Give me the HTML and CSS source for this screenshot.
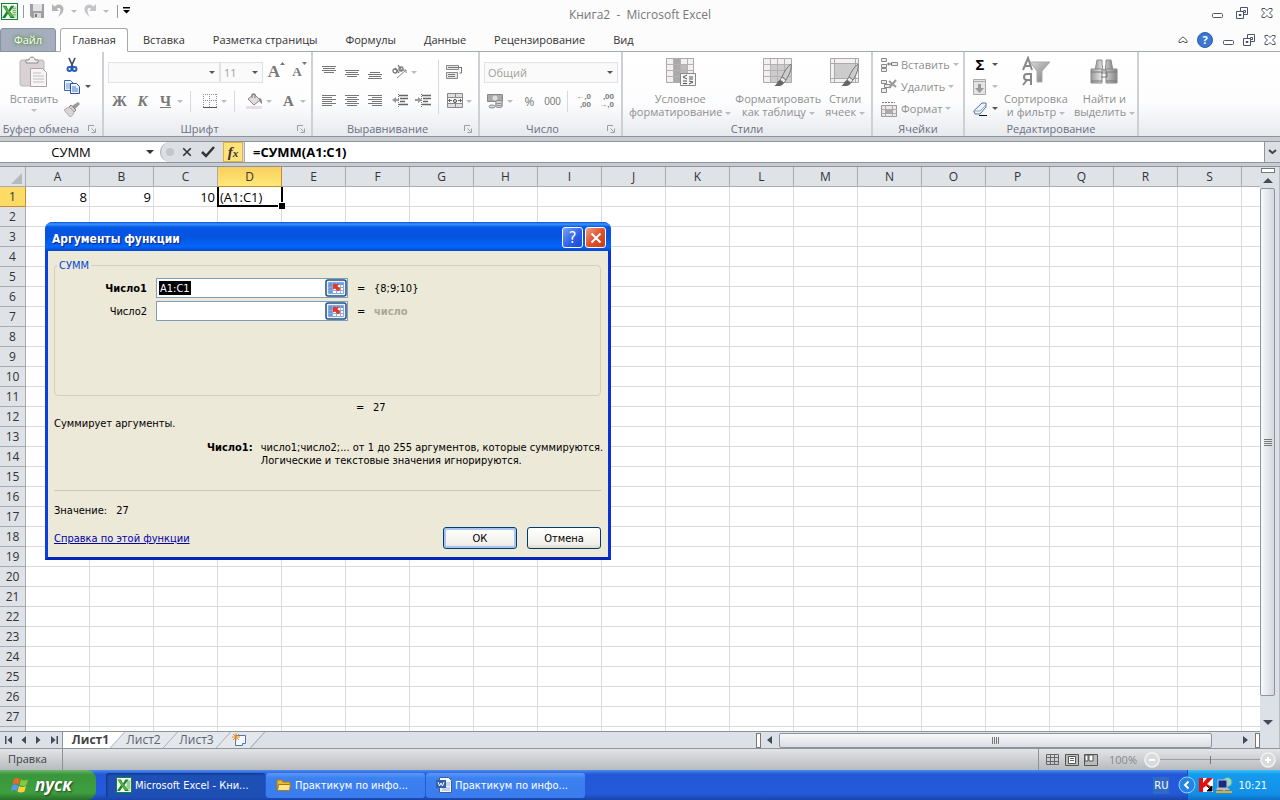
FILE: index.html
```html
<!DOCTYPE html>
<html lang="ru">
<head>
<meta charset="utf-8">
<title>Книга2 - Microsoft Excel</title>
<link rel="stylesheet" href="styles.css">
</head>
<body>
<svg class="defs" width="0" height="0" aria-hidden="true">
  <defs>
    <linearGradient id="gm" x1="0" y1="0" x2="1" y2="1"><stop offset="0" stop-color="#d8d8d8"/><stop offset="1" stop-color="#777"/></linearGradient>
    <linearGradient id="gb" x1="0" y1="0" x2="1" y2="0"><stop offset="0" stop-color="#999"/><stop offset=".4" stop-color="#e6e6e6"/><stop offset="1" stop-color="#888"/></linearGradient>
    <symbol id="min" viewBox="0 0 12 12"><rect x="1.500" y="6.500" width="10" height="4" rx="1" fill="#fff" stroke="#4c5468"/></symbol>
    <symbol id="rest" viewBox="0 0 12 12"><g fill="#fff" stroke="#4c5468"><path d="M4.500.5h7v7h-7z"/><path d="M7.500 3.500h2v2h-2z"/><path d="M.5 4.500h7v7h-7z"/><path d="M3 7.500h2v1H3z"/></g></symbol>
    <symbol id="cls" viewBox="0 0 12 12"><path d="M1 1.500h3l2 2 2-2h3v2L8.500 6 11 8.500v2H8l-2-2-2 2H1v-2L3.500 6 1 3.500z" fill="#fff" stroke="#4c5468"/></symbol>
    <symbol id="launch" viewBox="0 0 8 8"><path d="M.5 6V.5H6M3.500 3.500l3 3M7.500 3.500v4h-4" fill="none" stroke="#999ea8"/></symbol>
    <symbol id="xl" viewBox="0 0 16 16"><path d="M.5.5h15v15H.5z" fill="#f4fbef" stroke="#16823a"/><path d="M10 3h5v11h-5z" fill="#cfe6c4"/><path d="M11 5h3M11 7h3M11 9h3M11 11h3" stroke="#77a773"/><path d="M1.500 2.500h3.500l2 4L9.500 2.500H12.500L8.500 8l4.500 6H9L6.500 10 4 14H1L5 8z" fill="#178238"/><path d="M2 3h2l8 10h-3z" fill="#5db33e"/></symbol>
    <symbol id="rng" viewBox="0 0 22 18"><rect x="1" y="1" width="20" height="16" rx="2" fill="#eef3fb" stroke="#1c5180" stroke-width="1.500"/><path d="M3.500 3.500h15v11h-15z" fill="#fff" stroke="#8ba6dc"/><path d="M4 4h14v2H4zM4 6h3v8H4z" fill="#6d93dd"/><path d="M4 8.500h14M4 11.500h14M7.500 4v10M11.500 4v10M15.500 4v10" stroke="#8fa8df"/><path d="M8 5h6l-1.500 2 3 3-2.500 2.500-3-3-2 1z" fill="#e23a22"/></symbol>
    <symbol id="brush" viewBox="0 0 20 26"><path d="M18 2c-4 3-7 8-9 13l4 3c3-5 6-11 5-16z" fill="#ccc" stroke="#777"/><path d="M9 15l4 3-2 3-4-3z" fill="#eee" stroke="#777"/><path d="M7 18l4 3c-2 4-6 3-10 3 3-1 3-5 6-6z" fill="#666"/></symbol>
  </defs>
</svg>
<div class="app">
  <header class="top">
    <div class="titlebar">
      <div class="qat">
        <svg width="17" height="17"><use href="#xl"/></svg>
        <i class="vsep"></i>
        <button class="tool" aria-label="Сохранить"><svg width="16" height="16" viewBox="0 0 16 16"><path d="M1 1h14v14H3l-2-2z" fill="#9d9fa3"/><path d="M4 1h9v7H4z" fill="#e3e3e5"/><path d="M5 10h7v5H5z" fill="#d9d9db"/><path d="M6 11h2v3H6z" fill="#777"/></svg></button>
        <button class="tool" aria-label="Отменить"><svg width="16" height="16" viewBox="0 0 16 16"><path d="M2 1v7h7L6.800 5.800C10 3.500 12.500 7 8 14c8-5 7-13-.5-12.500L4.500 3.500z" fill="#b3b5b9"/></svg><i class="dd pale"></i></button>
        <button class="tool" aria-label="Вернуть"><svg width="16" height="16" viewBox="0 0 16 16"><path d="M14 1v7H7l2.200-2.200C6 3.500 3.500 7 8 14 0 9 1 1 8.500 1.500l3 2z" fill="#c3c5c9"/></svg><i class="dd pale"></i></button>
        <i class="vsep last"></i>
        <button class="tool" aria-label="Настройка"><svg width="8" height="8" viewBox="0 0 8 8"><path d="M0 0h7v1.500H0zM0 3h7L3.500 6.500z"/></svg></button>
      </div>
      <h1 class="title">Книга2&nbsp; -&nbsp; Microsoft Excel</h1>
      <div class="winbtns">
        <button aria-label="Свернуть"><svg width="12" height="12"><use href="#min"/></svg></button>
        <button aria-label="Восстановить"><svg width="12" height="12"><use href="#rest"/></svg></button>
        <button aria-label="Закрыть"><svg width="12" height="12"><use href="#cls"/></svg></button>
      </div>
    </div>
    <nav class="tabs">
      <button class="tab file">Файл</button>
      <button class="tab active">Главная</button>
      <button class="tab">Вставка</button>
      <button class="tab">Разметка страницы</button>
      <button class="tab">Формулы</button>
      <button class="tab">Данные</button>
      <button class="tab">Рецензирование</button>
      <button class="tab">Вид</button>
      <div class="docbtns">
        <button aria-label="Свернуть ленту"><svg width="10" height="8" viewBox="0 0 10 8"><path d="M5 .8L9 4.500v2H7L5 5 3 6.500H1v-2z" fill="#fff" stroke="#4c5468"/></svg></button>
        <button aria-label="Справка" class="help">?</button>
        <button aria-label="Свернуть окно"><svg width="12" height="12"><use href="#min"/></svg></button>
        <button aria-label="Восстановить окно"><svg width="12" height="12"><use href="#rest"/></svg></button>
        <button aria-label="Закрыть окно"><svg width="12" height="12"><use href="#cls"/></svg></button>
      </div>
    </nav>
  </header>

  <section class="ribbon">
    <div class="group g-clip">
      <div class="gbody">
        <button class="big"><svg width="32" height="32" viewBox="0 0 32 32"><rect x="2" y="4" width="24" height="26" rx="2" fill="#d9d2d5" stroke="#bdb6b9"/><path d="M8 7V4h3c0-4 6-4 6 0h3v3z" fill="#eee" stroke="#8f8f8f"/><path d="M12.500 12.500h12l4 4v14h-16z" fill="#f7f5f6" stroke="#a9a4a6"/><path d="M15 17h8M15 20h11M15 23h11M15 26h11" stroke="#c2bdbf"/></svg><span>Вставить</span><i class="dd pale"></i></button>
        <div class="stack">
          <button class="tool" aria-label="Вырезать"><svg width="16" height="16" viewBox="0 0 16 16"><path d="M5 1l4 9M11 1L7 10" stroke="#3c4a66" stroke-width="1.600"/><circle cx="5.500" cy="12" r="2" fill="none" stroke="#2a5bb8" stroke-width="2"/><circle cx="10.500" cy="12" r="2" fill="none" stroke="#2a5bb8" stroke-width="2"/></svg></button>
          <button class="tool" aria-label="Копировать"><svg width="16" height="16" viewBox="0 0 16 16"><path d="M.5 1.500h6l3 3v7h-9z" fill="#eef4ff" stroke="#3767ae"/><path d="M2 5h4M2 7h4M2 9h4" stroke="#6a93d0"/><path d="M6.500 4.500h6l3 3v7h-9z" fill="#eef4ff" stroke="#2a5299"/><path d="M8 8h4M8 10h6M8 12h6" stroke="#4a79c4"/></svg><i class="dd"></i></button>
          <button class="tool" aria-label="Формат по образцу"><svg width="16" height="16" viewBox="0 0 16 16"><path d="M14 1l2 2-5 5-3-3z" fill="#999"/><path d="M7 4l5 5-2 2-5-5z" fill="#ccc" stroke="#888"/><path d="M5 6l5 5c0 2-2 4-4 5L0 9z" fill="#ddd5d5" stroke="#aaa"/></svg></button>
        </div>
      </div>
      <div class="glabel"><span>Буфер обмена</span><svg width="8" height="8"><use href="#launch"/></svg></div>
    </div>

    <div class="group g-font">
      <div class="gbody rows">
        <div class="row">
          <span class="sel wide"><select aria-label="Шрифт"><option></option></select></span><span class="sel size"><select aria-label="Размер"><option>11</option></select></span>
          <button class="ib gly big-a" aria-label="Увеличить">A<svg width="5" height="4" viewBox="0 0 5 4"><path d="M0 3l2.500-3L5 3z" fill="#777"/></svg></button>
          <button class="ib gly small-a" aria-label="Уменьшить">A<svg width="5" height="4" viewBox="0 0 5 4"><path d="M0 0h5L2.500 3z" fill="#777"/></svg></button>
        </div>
        <div class="row">
          <button class="ib gly b">Ж</button><button class="ib gly i">К</button><button class="ib gly u">Ч</button><i class="dd pale"></i>
          <i class="rsep"></i>
          <button class="ib" aria-label="Границы"><svg width="14" height="14" viewBox="0 0 14 14"><path d="M0 .5h14M0 6.500h14M.5 0v13M6.500 0v13M13.500 0v13" stroke="#8f8f8f" stroke-dasharray="1 1"/><path d="M0 13.500h14" stroke="#555"/></svg></button><i class="dd pale"></i>
          <i class="rsep"></i>
          <button class="ib fill" aria-label="Заливка"><svg width="18" height="16" viewBox="0 0 18 16"><path d="M8 1l6 6-6 5-6-6z" fill="#ddd" stroke="#888"/><path d="M6 5V1h3v4" fill="none" stroke="#777"/><path d="M13 5c3 0 3 3 3 6-2-1-3-3-3-6z" fill="#888"/><path d="M0 13h16v3H0z" fill="#e8dfe2"/></svg></button><i class="dd pale"></i>
          <button class="ib gly col">A</button><i class="dd pale"></i>
        </div>
      </div>
      <div class="glabel"><span>Шрифт</span><svg width="8" height="8"><use href="#launch"/></svg></div>
    </div>

    <div class="group g-align">
      <div class="gbody">
        <div class="rows">
          <div class="row">
            <button class="ib" aria-label="По верхнему краю"><svg width="14" height="14" viewBox="0 0 14 14"><path d="M0 1.500h14M1 3.500h12M0 5.500h14M2 7.500h10" stroke="#777"/></svg></button>
            <button class="ib" aria-label="По середине"><svg width="14" height="14" viewBox="0 0 14 14"><path d="M0 5.500h14M1 7.500h12M0 9.500h14M2 11.500h10" stroke="#777"/></svg></button>
            <button class="ib" aria-label="По нижнему краю"><svg width="14" height="14" viewBox="0 0 14 14"><path d="M2 7.500h10M0 9.500h14M1 11.500h12M0 13.500h14" stroke="#777"/></svg></button>
            <button class="ib orient" aria-label="Ориентация"><svg width="18" height="16" viewBox="0 0 18 16"><g fill="none" stroke="#777" stroke-width="1.300"><circle cx="4" cy="7" r="2"/><path d="M4 4l4 5M7 1l4 6"/><circle cx="10" cy="5" r="2"/></g><path d="M6 14l9-8M12 6h3v3" fill="none" stroke="#888"/></svg></button><i class="dd pale"></i>
          </div>
          <div class="row">
            <button class="ib" aria-label="По левому краю"><svg width="14" height="14" viewBox="0 0 14 14"><path d="M0 1.500h14M0 3.500h10M0 5.500h14M0 7.500h10M0 9.500h14M0 11.500h10" stroke="#777"/></svg></button>
            <button class="ib" aria-label="По центру"><svg width="14" height="14" viewBox="0 0 14 14"><path d="M0 1.500h14M2 3.500h10M0 5.500h14M2 7.500h10M0 9.500h14M2 11.500h10" stroke="#777"/></svg></button>
            <button class="ib" aria-label="По правому краю"><svg width="14" height="14" viewBox="0 0 14 14"><path d="M0 1.500h14M4 3.500h10M0 5.500h14M4 7.500h10M0 9.500h14M4 11.500h10" stroke="#777"/></svg></button>
            <button class="ib orient" aria-label="Уменьшить отступ"><svg width="16" height="14" viewBox="0 0 16 14"><path d="M7 1.500h9M8 4.500h8M8 7.500h5M7 10.500h9" stroke="#666" stroke-width="1.500"/><path d="M6.500 0v14" stroke="#777" stroke-dasharray="1 1"/><path d="M0 6l4-3v2h3v2H4v2z" fill="#999"/></svg></button>
            <button class="ib" aria-label="Увеличить отступ"><svg width="16" height="14" viewBox="0 0 16 14"><path d="M7 1.500h9M8 4.500h8M8 7.500h5M7 10.500h9" stroke="#666" stroke-width="1.500"/><path d="M6.500 0v14" stroke="#777" stroke-dasharray="1 1"/><path d="M7 6L3 3v2H0v2h3v2z" fill="#999"/></svg></button>
          </div>
        </div>
        <i class="rsep tall"></i>
        <div class="rows">
          <div class="row"><button class="ib" aria-label="Перенос текста"><svg width="17" height="16" viewBox="0 0 17 16"><path d="M.5 1.500h12v4H.5zM.5 8.500h11v6H.5z" fill="#e9e6e7" stroke="#888"/><path d="M2 3.500h14M2 10.500h7M2 12.500h7" stroke="#777"/><path d="M15.500 4v5h-2" fill="none" stroke="#777"/></svg></button></div>
          <div class="row"><button class="ib" aria-label="Объединить"><svg width="16" height="16" viewBox="0 0 16 16"><path d="M.5.5h15v14H.5z" fill="#e0dddf" stroke="#888"/><path d="M1 5h14v5H1z" fill="#f6f6f6"/><path d="M0 4.500h16M0 10.500h16M8.500 0v4M8.500 11v4" stroke="#888"/><path d="M1 7.500h4M11 7.500h4M3 6l-1.500 1.500L3 9M13 6l1.500 1.500L13 9" fill="none" stroke="#666"/><circle cx="8" cy="8" r="1.500" fill="none" stroke="#444"/></svg></button><i class="dd pale"></i></div>
        </div>
      </div>
      <div class="glabel"><span>Выравнивание</span><svg width="8" height="8"><use href="#launch"/></svg></div>
    </div>

    <div class="group g-num">
      <div class="gbody rows">
        <div class="row"><span class="sel fmt"><select aria-label="Числовой формат"><option>Общий</option></select></span></div>
        <div class="row">
          <button class="ib" aria-label="Денежный формат"><svg width="17" height="16" viewBox="0 0 17 16"><path d="M.5 1.500h15v7H.5z" fill="#aaa" stroke="#888"/><circle cx="8" cy="5" r="2.500" fill="#ddd"/><g fill="#ddd" stroke="#888"><ellipse cx="12" cy="13" rx="3.500" ry="1.500"/><ellipse cx="12" cy="11" rx="3.500" ry="1.500"/><ellipse cx="12" cy="9" rx="3.500" ry="1.500"/><ellipse cx="5" cy="13.500" rx="3" ry="1.500"/></g></svg></button><i class="dd pale"></i>
          <button class="ib txt pc">%</button><button class="ib txt narrow">000</button>
          <i class="rsep"></i>
          <button class="ib mini" aria-label="Увеличить разрядность"><span>←,0</span><span>,00</span></button>
          <button class="ib mini" aria-label="Уменьшить разрядность"><span>,00</span><span>→,0</span></button>
        </div>
      </div>
      <div class="glabel"><span>Число</span><svg width="8" height="8"><use href="#launch"/></svg></div>
    </div>

    <div class="group g-styles">
      <div class="gbody">
        <button class="big"><svg width="32" height="32" viewBox="0 0 32 32"><path d="M2.500 2.500h27v24h-27z" fill="#f4eff1" stroke="#aaa"/><path d="M9 3h7v24H9z" fill="#aaa"/><path d="M16 9h7v8h-7z" fill="#bbb"/><path d="M2 8.500h28M2 14.500h28M2 20.500h28M9.500 2v25M16.500 2v25M23.500 2v25" stroke="#b5b0b2"/><path d="M16.500 17.500h15v12h-15z" fill="#f6f6f6" stroke="#888"/><path d="M23 19l-4 2 4 2M19 25h4M19 27.500h4M25 21h4M25 23h4M25 25l4 1-4 2" fill="none" stroke="#555"/></svg><span>Условное<br>форматирование <i class="dd pale"></i></span></button>
        <button class="big"><svg width="32" height="32" viewBox="0 0 32 32"><path d="M1.500 2.500h28v24h-28z" fill="#f4eff1" stroke="#aaa"/><path d="M9 9h20v17H9z" fill="#ccc"/><path d="M1 8.500h29M1 14.500h29M1 20.500h29M8.500 2v25M15.500 2v25M22.500 2v25" stroke="#b5b0b2"/><use href="#brush" x="11" y="6" width="20" height="26"/></svg><span>Форматировать<br>как таблицу <i class="dd pale"></i></span></button>
        <button class="big"><svg width="32" height="32" viewBox="0 0 32 32"><path d="M1.500 2.500h28v24h-28z" fill="#f4eff1" stroke="#aaa"/><path d="M6 7h20v15H6z" fill="#ccc"/><path d="M1 7.500h29M1 22.500h29M5.500 2v25M26.500 2v25" stroke="#aaa"/><use href="#brush" x="11" y="6" width="20" height="26"/></svg><span>Стили<br>ячеек <i class="dd pale"></i></span></button>
      </div>
      <div class="glabel"><span>Стили</span></div>
    </div>

    <div class="group g-cells">
      <div class="gbody stack">
        <button class="tool"><svg width="17" height="16" viewBox="0 0 17 16"><path d="M.5 1.500h5v3h-5zM.5 7.500h5v3h-5zM.5 11.500h5v3h-5zM10.500 5.500h6v3h-6z" fill="#eee" stroke="#888"/><path d="M7 7h4M8 5.500L6.500 7 8 8.500" fill="none" stroke="#555"/></svg>Вставить <i class="dd pale"></i></button>
        <button class="tool"><svg width="17" height="16" viewBox="0 0 17 16"><path d="M.5 1.500h5v3h-5zM3.500 5.500h6v3h-6zM.5 9.500h5v4h-5z" fill="#eee" stroke="#888"/><path d="M8 2l7 6M15 1L8 9" stroke="#999" stroke-width="2"/></svg>Удалить <i class="dd pale"></i></button>
        <button class="tool"><svg width="17" height="16" viewBox="0 0 17 16"><path d="M1 1.500h13" stroke="#777" stroke-dasharray="2 1"/><path d="M.5 4.500h15v11H.5z" fill="#eee6e8" stroke="#999"/><path d="M0 8.500h16M0 12.500h16M4.500 4v12M11.500 4v12" stroke="#aaa"/><path d="M5 8h6v4H5z" fill="#aaa"/></svg>Формат <i class="dd pale"></i></button>
      </div>
      <div class="glabel"><span>Ячейки</span></div>
    </div>

    <div class="group g-edit">
      <div class="gbody">
        <div class="stack">
          <button class="tool" aria-label="Сумма"><b class="sigma">Σ</b><i class="dd"></i></button>
          <button class="tool" aria-label="Заполнить"><svg width="14" height="16" viewBox="0 0 14 16"><path d="M.5.5h12v15H.5z" fill="#e5e3e4" stroke="#aaa"/><path d="M1 2.500h11" stroke="#aaa"/><path d="M5 5h3v4h3l-4.500 5L2 9h3z" fill="#999"/></svg><i class="dd pale"></i></button>
          <button class="tool" aria-label="Очистить"><svg width="14" height="14" viewBox="0 0 14 14"><path d="M9 1h4v4l-6 7H2L.7 9z" fill="#eef3fb" stroke="#5a6f96"/><path d="M1 9h6l6-6" fill="none" stroke="#8fa3c8"/><path d="M6 13.500h8" stroke="#111"/></svg><i class="dd"></i></button>
        </div>
        <button class="big"><svg width="32" height="32" viewBox="0 0 32 32"><g fill="none" stroke="#888" stroke-width="2"><path d="M3 14l5-12 4 12M5 10h6"/><path d="M11 29V18H7c-4 0-4 6 0 6h4M7 24l-4 5"/></g><path d="M10 6h20l-8 9v11h-5V15z" fill="url(#gm)" stroke="#aaa"/></svg><span>Сортировка<br>и фильтр <i class="dd pale"></i></span></button>
        <button class="big"><svg width="32" height="32" viewBox="0 0 32 32"><path d="M9 4h5v4l1 6h2l1-6V4h5l2 11H7z" fill="url(#gb)" stroke="#888"/><path d="M3 13h11v14H3zM18 13h11v14H18z" fill="url(#gb)" stroke="#888"/><path d="M3 16h11M18 16h11M3 25h11M18 25h11M13 17h6v4h-6" fill="none" stroke="#777"/></svg><span>Найти и<br>выделить <i class="dd pale"></i></span></button>
      </div>
      <div class="glabel"><span>Редактирование</span></div>
    </div>
  </section>

  <section class="fbar">
    <div class="namebox"><input aria-label="Имя" value="СУММ"><i class="dd dark"></i></div>
    <div class="fbtns">
      <i class="ball"></i>
      <button aria-label="Отмена"><svg width="10" height="10" viewBox="0 0 12 12"><path d="M1.500 1.500l9 9M10.500 1.500l-9 9" stroke="#333" stroke-width="2"/></svg></button>
      <button aria-label="Ввод"><svg width="14" height="12" viewBox="0 0 14 12"><path d="M1 6l4 4 8-9" fill="none" stroke="#333" stroke-width="2.500"/></svg></button>
      <button class="fx" aria-label="Вставить функцию">f<small>x</small></button>
    </div>
    <input class="formula" aria-label="Строка формул" value="=СУММ(A1:C1)">
    <button class="expand" aria-label="Развернуть"><svg width="9" height="6" viewBox="0 0 9 6"><path d="M1 1l3.500 3L8 1" fill="none" stroke="#444" stroke-width="2"/></svg></button>
  </section>

  <main class="work">
    <div class="left">
      <div class="sheet"><table class="grid" id="grid"></table></div>
      <footer class="sheetbar">
        <div class="nav">
          <button aria-label="Первый"><svg width="8" height="8" viewBox="0 0 8 8"><path d="M0 0h1.500v8H0zM7 0v8L2.500 4z" fill="#444b57"/></svg></button>
          <button aria-label="Назад"><svg width="8" height="8" viewBox="0 0 8 8"><path d="M6 0v8L1.500 4z" fill="#444b57"/></svg></button>
          <button aria-label="Вперёд"><svg width="8" height="8" viewBox="0 0 8 8"><path d="M1 0v8l4.500-4z" fill="#444b57"/></svg></button>
          <button aria-label="Последний"><svg width="8" height="8" viewBox="0 0 8 8"><path d="M6.500 0H8v8H6.500zM1 0v8l4.500-4z" fill="#444b57"/></svg></button>
        </div>
        <div class="stabs">
          <button class="st on">Лист1</button><button class="st">Лист2</button><button class="st">Лист3</button><button class="st new" aria-label="Новый лист"><svg width="16" height="14" viewBox="0 0 16 14"><path d="M3.500 2.500h10v8h-3v2h-7z" fill="#f4f8ff" stroke="#5677ab"/><path d="M4 0v8M0 4h8M1 1l6 6M7 1L1 7" stroke="#e0912a"/></svg></button>
        </div>
        <div class="hscroll">
          <i class="split"></i>
          <svg width="6" height="8" viewBox="0 0 6 8"><path d="M5 0v8L0 4z" fill="#444b57"/></svg>
          <i class="hthumb"><b></b></i>
          <svg class="ra" width="6" height="8" viewBox="0 0 6 8"><path d="M0 0v8l5-4z" fill="#444b57"/></svg>
          <i class="split"></i>
        </div>
      </footer>
    </div>
    <div class="vscroll">
      <i class="vsplit"></i>
      <svg width="10" height="5" viewBox="0 0 10 5"><path d="M0 5h10L5 0z" fill="#444b57"/></svg>
      <i class="vthumb"><b></b></i>
      <svg class="da" width="10" height="5" viewBox="0 0 10 5"><path d="M0 0h10L5 5z" fill="#444b57"/></svg>
    </div>
  </main>

  <div class="status">
    <span class="mode">Правка</span>
    <div class="sright">
      <button aria-label="Обычный"><svg width="14" height="12" viewBox="0 0 14 12"><path d="M.5.5h12v10H.5zM0 3.500h13M0 7.500h13M4.500 0v11M8.500 0v11" fill="none" stroke="#666"/></svg></button>
      <button aria-label="Разметка"><svg width="14" height="12" viewBox="0 0 14 12"><path d="M.5.5h13v11H.5z" fill="#bbb" stroke="#555"/><path d="M3.500 2.500h7v7h-7z" fill="#fff" stroke="#555"/><path d="M5 4.500h4M5 6.500h4" stroke="#666"/></svg></button>
      <button aria-label="Страничный"><svg width="14" height="12" viewBox="0 0 14 12"><path d="M.5.5h13v11H.5z" fill="#bbb" stroke="#555"/><path d="M1 1h3v6H1zM5 1h4v6H5z" fill="#fff" stroke="#555"/></svg></button>
      <span class="pct">100%</span>
      <button class="rnd" aria-label="Уменьшить масштаб"><svg width="16" height="16" viewBox="0 0 16 16"><circle cx="8" cy="8" r="7" fill="#d9dadc" stroke="#f2f2f2" stroke-width="1.500"/><path d="M5 8h6" stroke="#fff" stroke-width="2"/></svg></button>
      <input type="range" class="zoom" aria-label="Масштаб" value="50">
      <button class="rnd" aria-label="Увеличить масштаб"><svg width="16" height="16" viewBox="0 0 16 16"><circle cx="8" cy="8" r="7" fill="#d9dadc" stroke="#f2f2f2" stroke-width="1.500"/><path d="M5 8h6M8 5v6" stroke="#fff" stroke-width="2"/></svg></button>
    </div>
  </div>

  <div class="taskbar">
    <button class="start"><svg width="18" height="18" viewBox="0 0 18 18"><path d="M3 3c2-1.500 4-1.500 6 0L7.500 8.500c-2-1.500-4-1.500-6 0z" fill="#f0652a"/><path d="M10 3.500c2 1.300 4 1.300 7 0L15.500 9c-3 1.300-5 1.300-7 0z" fill="#8cc63f"/><path d="M1.200 9.500c2-1.500 4-1.500 6 0L6 15c-2-1.500-4-1.500-6 0z" fill="#5a94f5"/><path d="M8 10c2 1.300 4 1.300 7 0l-1.500 5.500c-3 1.300-5 1.300-7 0z" fill="#fcd13b"/></svg>пуск</button>
    <div class="tasks">
      <button class="task on"><svg width="16" height="16"><use href="#xl"/></svg>Microsoft Excel - Кни...</button>
      <button class="task"><svg width="16" height="16" viewBox="0 0 16 16"><path d="M1 3h5l1 2h7v3H3L1 13z" fill="#e9b93a" stroke="#a77a17"/><path d="M1.500 13.500l1-6h12l-1 6z" fill="#fde58a" stroke="#a77a17"/></svg>Практикум по инфо...</button>
      <button class="task"><svg width="16" height="16" viewBox="0 0 16 16"><path d="M3.500.5h9l3 3v12h-12z" fill="#f3f7fd" stroke="#40608f"/><path d="M10 6h4M10 8h4M6 11h8M6 13h8" stroke="#93abd0"/><path d="M0 3h10v8H0z" fill="#2f5fae"/><path d="M2 5l1.500 4L5 6l1.500 3L8 5" fill="none" stroke="#fff"/></svg>Практикум по инфо...</button>
    </div>
    <span class="lang">RU</span>
    <div class="tray">
      <button class="chev" aria-label="Показать значки"><svg width="18" height="18" viewBox="0 0 18 18"><circle cx="9" cy="9" r="8" fill="#2484e4" stroke="#9cd0fa"/><path d="M10.500 5.500L7 9l3.500 3.500" fill="none" stroke="#fff" stroke-width="2"/></svg></button>
      <svg width="16" height="16" viewBox="0 0 16 16"><path d="M1 1h14v14H1z" fill="#fff"/><path d="M1 1h4v5l4-5h6L9 7l5 3-3 1-3-2-3 2v4H1z" fill="#e01010"/><path d="M9 9l4 4M14 9v5H9z" fill="#000" stroke="#000"/></svg>
      <svg width="17" height="16" viewBox="0 0 17 16"><circle cx="11.500" cy="5" r="4.500" fill="#9adbc0" stroke="#4a9"/><path d="M2 3h9v8H2z" fill="#1a2b80" stroke="#b9c4dd"/><path d="M1 11h11l2 2H0z" fill="#bbb"/><path d="M0 15h16M8 13v2" stroke="#f0a81c" stroke-width="2"/></svg>
      <time>10:21</time>
    </div>
  </div>

  <div class="dialog" role="dialog" aria-labelledby="dt">
    <div class="dtitle"><h2 id="dt">Аргументы функции</h2><button class="dq" aria-label="Справка">?</button><button class="dx" aria-label="Закрыть"><svg width="12" height="12" viewBox="0 0 12 12"><path d="M1.500 1.500l9 9M10.500 1.500l-9 9" stroke="#fff" stroke-width="2"/></svg></button></div>
    <div class="dbody">
      <fieldset class="args">
        <legend>СУММ</legend>
        <label class="bold" for="a1">Число1</label><div class="field"><input id="a1" class="hl" value="A1:C1"><button aria-label="Свернуть"><svg width="22" height="18"><use href="#rng"/></svg></button></div><span>=</span><span>{8;9;10}</span>
        <label for="a2">Число2</label><div class="field"><input id="a2"><button aria-label="Свернуть"><svg width="22" height="18"><use href="#rng"/></svg></button></div><span>=</span><span class="ghost">число</span>
      </fieldset>
      <div class="result"><span>=</span><output>27</output></div>
      <p class="about">Суммирует аргументы.</p>
      <div class="argdesc"><b>Число1:</b><p>число1;число2;... от 1 до 255 аргументов, которые суммируются.<br>Логические и текстовые значения игнорируются.</p></div>
      <hr>
      <p class="value">Значение:<span>27</span></p>
      <div class="dfoot"><a href="#">Справка по этой функции</a><button class="btn def">ОК</button><button class="btn">Отмена</button></div>
    </div>
  </div>
</div>
<script src="script.js"></script>
</body>
</html>
```
FILE: styles.css
```css
* { box-sizing: border-box; }
body { margin: 0; font: 11px/13px "Open Sans", "Noto Sans", sans-serif; color: #3b3f46; }
button { border: 0; padding: 0; margin: 0; background: none; font: inherit; color: inherit; }
input, select { font: inherit; color: inherit; border: 0; padding: 0; margin: 0; border-radius: 0; }
p, h1, h2 { margin: 0; font-weight: normal; }
svg { display: block; flex: none; }
i { font-style: normal; }
.defs { position: absolute; }
.app { position: relative; display: flex; flex-direction: column; height: 100vh; overflow: hidden; background: #c9ccd1; }

.dd { display: inline-block; flex: none; width: 0; height: 0; border: 3px solid transparent; border-top-color: #555; border-bottom: 0; vertical-align: middle; }
.dd.pale { border-top-color: #b9bbc0; }
.dd.dark { border-top-color: #333; border-width: 4px 4px 0; }

/* title and tabs */
.top { background: #fcfcfc; }
.titlebar { display: grid; grid-template-columns: 1fr auto 1fr; align-items: center; height: 28px; }
.qat { display: flex; align-items: center; align-self: start; height: 22px; gap: 5px; padding-left: 1px; }
.vsep { width: 1px; height: 13px; background: #999; }
.last { margin-left: 3px; }
.tool { display: flex; align-items: center; gap: 5px; }
.title { font-size: 12px; color: #777; }
.winbtns, .docbtns { display: flex; align-items: center; gap: 13px; justify-content: flex-end; padding-right: 7px; }
.winbtns { margin-top: -2px; }
.tabs { display: flex; height: 24px; border-bottom: 1px solid #a5a9b0; }
.tab { padding: 0 14px; height: 24px; line-height: 22px; border-radius: 3px 3px 0 0; color: #333; }
.file { width: 56px; padding: 0; margin-right: 4px; background: #a5aebc; border: 1px solid #8a93a1; color: #fff; text-shadow: 0 0 4px #4d8a28, 0 0 3px #4d8a28; }
.active { background: #fff; border: 1px solid #a5a9b0; border-bottom-color: #fff; width: 68px; padding: 0; margin-right: 1px; }
.docbtns { margin-left: auto; gap: 9px; padding-right: 4px; }
.help { width: 16px; height: 16px; border-radius: 50%; background: #3b76cf; border: 1px solid #2a5db0; color: #fff; font-weight: bold; line-height: 14px; }

/* ribbon */
.ribbon { display: flex; height: 85px; flex: none; background: linear-gradient(#fff, #fdfdfe 60%, #e7eaee); border-bottom: 1px solid #8f949c; color: #8f8f8f; }
.group { display: flex; flex-direction: column; flex: none; border-right: 2px solid #cdd0d5; }
.gbody { flex: 1; display: flex; align-items: center; }
.rows { display: flex; flex-direction: column; align-items: stretch; justify-content: center; gap: 8px; }
.row { display: flex; align-items: center; height: 21px; }
.glabel { display: flex; height: 15px; align-items: center; color: #6b6f82; }
.glabel span { flex: 1; text-align: center; line-height: 14px; }
.glabel svg { margin: 0 6px; }
.big { align-self: flex-start; display: flex; flex-direction: column; align-items: center; padding-top: 4px; color: #8f8f8f; }
.big span { margin-top: 4px; white-space: nowrap; }
.big > .dd { margin-top: 4px; }
.stack { display: flex; flex-direction: column; align-items: flex-start; justify-content: center; gap: 6px; }
.stack .tool { height: 16px; gap: 5px; }
.ib { width: 23px; height: 21px; display: flex; align-items: center; justify-content: center; }
.rsep { width: 1px; height: 21px; background: #d5d8dd; margin: 0 7px; }
.g-align .tall { height: 54px; margin: 0 4px; }
.gly { font: bold 15px/20px "Liberation Serif", serif; color: #777; }
.gly svg { align-self: flex-start; }
.big-a { font-size: 17px; }
.i { font-style: italic; }
.u { text-decoration: underline; }
.small-a { font-size: 13px; }
.sel { position: relative; height: 21px; border: 1px solid #dfe2e7; background: #fafafb; }
.sel select { width: 100%; height: 100%; appearance: none; background: none; padding-left: 3px; color: #a3a095; }
.sel::after { content: ""; position: absolute; right: 4px; top: 8px; border: 3px solid transparent; border-top-color: #555; border-bottom: 0; }
.wide { width: 112px; }
.size { width: 43px; margin-right: 2px; }
.fmt { width: 134px; }
.txt { font-size: 12px; color: #777; }
.pc { margin-left: 5px; }
.narrow { font-family: "Liberation Sans", sans-serif; font-size: 10px; }
.mini { flex-direction: column; align-items: flex-end; font: bold 8px/8px "Liberation Sans", sans-serif; color: #777; padding-right: 3px; }
.orient { margin-left: 2px; }
.g-clip { width: 104px; }
.g-clip .big { width: 58px; margin-left: 5px; margin-right: 1px; }
.g-font { width: 209px; padding-left: 4px; }
.g-font .rsep { margin: 0 7px; }
.fill { margin-left: 1px; }
.col { margin-left: 5px; }
.g-align { width: 167px; padding-left: 4px; }
.g-num { width: 143px; padding-left: 4px; }
.g-num .rsep { margin: 0 3px; }
.g-styles { width: 250px; }
.g-styles .gbody { justify-content: space-around; padding: 0 4px; }
.g-cells { width: 92px; }
.g-cells .gbody { padding-left: 8px; }
.g-cells .tool { gap: 3px; }
.g-edit { width: 174px; }
.g-edit .gbody { padding-left: 8px; gap: 6px; }
.sigma { width: 14px; color: #000; font-size: 15px; }

/* formula bar */
.fbar { display: flex; flex: none; height: 22px; margin: 4px 0 3px; background: #fff; border: 1px solid #8d949e; border-width: 1px 0; color: #000; font-size: 13px; }
.namebox { display: flex; align-items: center; width: 158px; padding-right: 4px; }
.namebox input { flex: 1; min-width: 0; text-align: center; padding-right: 4px; }
.fbtns { display: flex; align-items: center; justify-content: space-between; width: 85px; margin-left: 2px; padding: 0 1px 0 5px; border: 1px solid #a5a9b0; border-width: 0 1px; border-radius: 11px 0 0 11px; background: #dcdfe4; }
.ball { width: 8px; height: 8px; border-radius: 50%; background: #c3c6cb; }
.fx { width: 20px; height: 20px; background: #ffe27a; border: 1px solid #d9b14a; font: italic bold 15px/16px "Liberation Serif", serif; color: #333; }
.fx small { font-size: 11px; }
.formula { flex: 1; min-width: 0; padding-left: 8px; font-weight: bold; }
.expand { width: 16px; display: flex; align-items: center; justify-content: center; background: #dcdfe4; border-left: 1px solid #8d949e; }

/* sheet */
.work { flex: 1; min-height: 0; display: flex; border-top: 1px solid #8d949e; }
.left { flex: 1; min-width: 0; display: flex; flex-direction: column; }
.sheet { flex: 1; min-height: 0; overflow: hidden; background: #fff; }
.grid { border-collapse: separate; border-spacing: 0; table-layout: fixed; width: 1370px; font-size: 12px; line-height: 18px; }
.grid th, .grid td { width: 64px; height: 20px; padding: 0 2px; font-weight: normal; border: 1px solid #d9dbde; border-width: 0 1px 1px 0; white-space: nowrap; overflow: hidden; }
.grid th { background: #dfe2e7; border-color: #a9adb3; text-align: center; color: #333; }
.grid th.rh { width: 26px; padding: 0; }
.grid td { text-align: right; color: #000; font-size: 13px; }
.grid th.sel-h { background: #fddc66; border-color: #c98d2c; }
.grid thead th.sel-h { background: linear-gradient(#f9cf5d, #ffe978); }
.grid td.edit { position: relative; overflow: visible; text-align: left; border-color: transparent; padding-left: 2px; }
.grid td.edit::before { content: ""; position: absolute; inset: 0 -2px -1px -1px; border: 2px solid #000; border-top: 0; }
.grid td.edit::after { content: ""; position: absolute; right: -4px; bottom: -3px; width: 6px; height: 6px; background: #000; border: 1px solid #fff; border-width: 1px 0 0 1px; }
.corner::after { content: ""; display: block; margin: 4px 3px 0 auto; width: 0; border-left: 11px solid transparent; border-bottom: 11px solid #b6babf; }

.sheetbar { display: flex; height: 17px; flex: none; background: #dce0e7; border-top: 1px solid #8d949e; }
.nav { display: flex; align-items: center; width: 63px; padding-left: 5px; gap: 7px; border-right: 1px solid #8d949e; }
.stabs { display: flex; flex: 1; overflow: hidden; isolation: isolate; }
.st { position: relative; width: 53px; height: 16px; font-size: 12px; line-height: 16px; color: #5c6270; padding-right: 2px; }
.st::before { content: ""; position: absolute; inset: 0; z-index: -1; background: #e4e7ec; border-right: 1px solid #9aa0a9; transform: skewX(-42deg); }
.st.on { width: 55px; padding: 0; font-weight: bold; color: #444; }
.st.on::before { background: #fff; left: -10px; }
.new { display: flex; justify-content: center; align-items: center; width: 34px; }
.hscroll { display: flex; align-items: center; width: 504px; }
.split { width: 5px; height: 15px; border: 1px solid #777; background: #fff; }
.hscroll svg { margin: 0 6px; }
.hthumb { flex: 1; height: 15px; border: 1px solid #8d949e; border-radius: 2px; background: linear-gradient(#f7f8fa, #d9dde3); display: flex; align-items: center; justify-content: center; }
.hthumb b { width: 8px; height: 7px; background: repeating-linear-gradient(90deg, #777 0 1px, transparent 1px 2px); }
.hscroll .ra { margin-left: 31px; }
.vscroll { width: 20px; display: flex; flex-direction: column; align-items: center; padding-right: 4px; background: #dce0e7; border-right: 1px solid #b9bdc3; }
.vsplit { width: 14px; height: 5px; margin: 1px 0 5px; border: 1px solid #777; background: #fff; }
.vthumb { flex: 1; width: 15px; margin: 5px 0 24px; border: 1px solid #8d949e; border-radius: 2px; background: linear-gradient(90deg, #f7f8fa, #d3d8df); display: flex; align-items: center; justify-content: center; }
.vthumb b { width: 8px; height: 7px; background: repeating-linear-gradient(#777 0 1px, transparent 1px 2px); }
.da { margin-bottom: 23px; }

/* status */
.status { display: flex; flex: none; height: 22px; justify-content: space-between; border-top: 1px solid #8d949e; background: linear-gradient(#e3e4e6, #b7babe); }
.mode { width: 63px; padding-left: 8px; line-height: 20px; border-right: 1px solid #8d9197; }
.sright { display: flex; align-items: center; gap: 5px; padding: 0 4px 0 7px; border-left: 1px solid #8d9197; }
.pct { margin: 0 2px 0 6px; color: #85888d; }
.zoom { appearance: none; background: linear-gradient(#9da0a5, #9da0a5) center / 100% 1px no-repeat; width: 100px; height: 10px; margin: 0 -5px; }
.zoom::-webkit-slider-thumb { appearance: none; width: 1px; height: 8px; background: #777; }

/* taskbar */
.taskbar { display: flex; align-items: center; flex: none; height: 30px; background: linear-gradient(#4a8cf0, #2359d8 14%, #2459d9 80%, #1a43a6); color: #fff; font-family: "DejaVu Sans Condensed", "DejaVu Sans", sans-serif; }
.start { display: flex; align-items: center; gap: 6px; width: 96px; height: 30px; padding-left: 11px; border-radius: 0 9px 9px 0; background: linear-gradient(#6db66d, #3a963a 15%, #3f9f3f 75%, #28702a); font: italic bold 17px/20px "Open Sans", sans-serif; text-shadow: 1px 1px 2px #1c431c; }
.tasks { display: flex; flex: 1; gap: 1px; padding-left: 10px; }
.task { display: flex; align-items: center; gap: 3px; width: 159px; height: 25px; padding-left: 10px; border-radius: 3px; background: linear-gradient(#5c99f7, #3c81f0 20%, #3a7bee); white-space: nowrap; }
.task.on { background: #1d4fb5; box-shadow: inset 1px 1px 2px #12357c; }
.lang { padding: 2px 1px; margin-right: 18px; background: #316ac5; }
.tray { display: flex; align-items: center; gap: 2px; height: 30px; padding-right: 13px; background: linear-gradient(#3ec0f7, #159bee 14%, #1290e8 80%, #0d6ec2); border-left: 1px solid #0b54b0; }
.chev { margin-left: -10px; }
.tray time { margin-left: 3px; }

/* dialog */
.dialog { position: absolute; left: 45px; top: 222px; width: 566px; border: 3px solid #0a3ee0; border-top: 0; border-right-color: #0831d9; border-bottom-color: #0426b8; border-radius: 8px 8px 0 0; background: #ece9d8; color: #000; font-family: "DejaVu Sans Condensed", "DejaVu Sans", sans-serif; }
.dtitle { display: flex; align-items: center; gap: 2px; height: 29px; margin: 0 -3px; padding: 2px 5px 0 7px; border-radius: 7px 7px 0 0; background: linear-gradient(#0a4fd0, #3b94ff 7%, #0557e5 18%, #0553df 50%, #0466fb 85%, #0246c5); color: #fff; }
.dtitle h2 { flex: 1; padding-top: 3px; font-size: 12px; font-weight: bold; text-shadow: 1px 1px 1px #0f1f7c; }
.dq, .dx { width: 21px; height: 21px; border: 1px solid #fff; border-radius: 3px; background: linear-gradient(135deg, #7aa0f5, #2a5ee8 60%, #1c4ad0); font-size: 16px; line-height: 18px; }
.dx { display: flex; align-items: center; justify-content: center; background: linear-gradient(135deg, #f0a088, #e0522e 50%, #c83c18); }
.dbody { padding: 8px 7px 8px 6px; }
.args { display: grid; grid-template-columns: 92px 192px 8px 1fr; align-content: start; align-items: center; gap: 3px 9px; height: 137px; margin: 0; padding: 6px 0 0; border: 1px solid #d0d0bf; border-radius: 4px; }
.args legend { margin-left: 2px; padding: 0 2px; color: #0046d5; }
.args label { text-align: right; }
.bold { font-weight: bold; }
.field { display: flex; height: 20px; border: 1px solid #7f9db9; background: #fff; }
.field input { flex: 1; min-width: 0; padding-left: 3px; background: none; }
.field input.hl { flex: none; width: 32px; height: 14px; margin: 2px; padding: 0 0 0 1px; background: #000; color: #fff; outline: 0; }
.field button { margin-left: auto; }
.ghost { color: #aca899; font-weight: bold; }
.result { display: grid; grid-template-columns: 10px 1fr; gap: 7px; padding: 5px 0 0 302px; }
.about { margin-top: 3px; }
.argdesc { display: flex; gap: 8px; margin: 11px 0 23px 153px; white-space: nowrap; }
.dbody hr { margin: 0; border: 0; border-top: 1px solid #c9c7b5; }
.value { margin-top: 13px; }
.value span { margin-left: 9px; }
.dfoot { display: flex; align-items: center; gap: 10px; margin-top: 10px; }
.dfoot a { flex: 1; color: #0000a8; }
.btn { width: 74px; height: 22px; border: 1px solid #003c74; border-radius: 3px; background: linear-gradient(#fff, #f1f0ea 80%, #dcd8cc); }
.def { box-shadow: inset 0 0 0 2px #a9c4f2; }
```
FILE: script.js
```javascript
const table = document.getElementById('grid');
const columns = [...'ABCDEFGHIJKLMNOPQRS', '', ''];
const values = { A1: '8', B1: '9', C1: '10', D1: '(A1:C1)' };
const mark = (on) => (on ? ' sel-h' : '');
const lastRow = 27;

const head = columns.map((l) => `<th class="ch${mark(l === 'D')}">${l}</th>`).join('');
let rows = '';
for (let r = 1; r <= lastRow + 1; r += 1) {
  const cells = columns.map((l) => {
    const id = l + r;
    return `<td${id === 'D1' ? ' class="edit"' : ''}>${values[id] || ''}</td>`;
  }).join('');
  rows += `<tr><th class="rh${mark(r === 1)}">${r <= lastRow ? r : ''}</th>${cells}</tr>`;
}
table.innerHTML = `<thead><tr><th class="rh corner"></th>${head}</tr></thead><tbody>${rows}</tbody>`;
```
